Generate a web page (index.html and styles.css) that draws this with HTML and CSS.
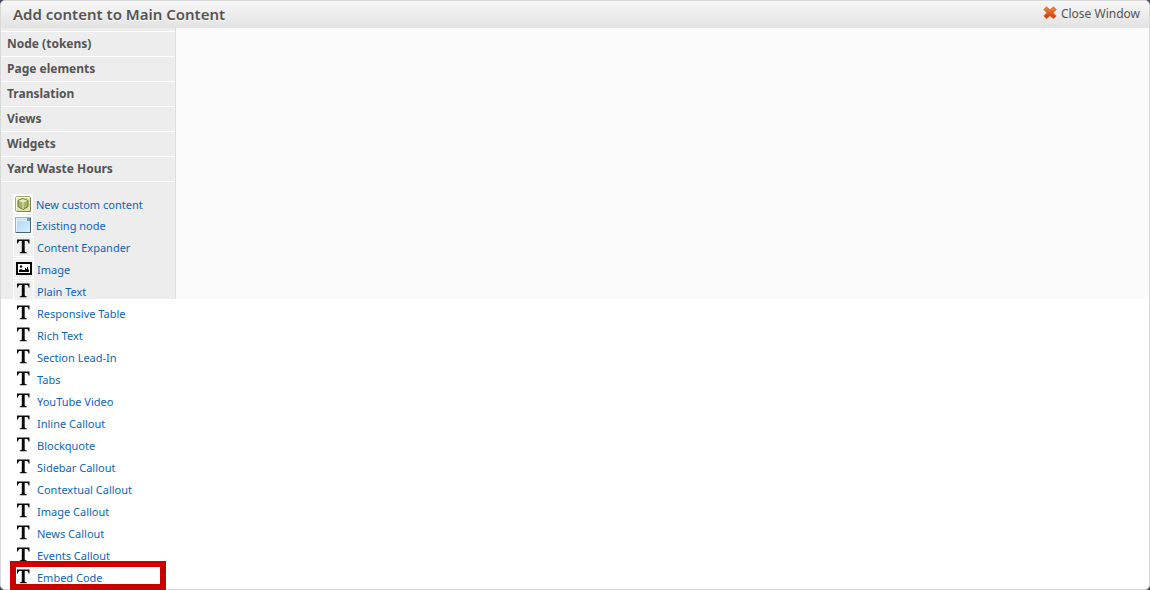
FILE: index.html
```html
<!DOCTYPE html>
<html lang="en">
<head>
<meta charset="utf-8">
<title>Add content to Main Content</title>
<link rel="stylesheet" href="styles.css">
</head>
<body>
<svg class="defs" aria-hidden="true">
  <defs>
    <linearGradient id="red" x1="0" y1="0" x2="0" y2="1"><stop offset="0" stop-color="#f08a3c"/><stop offset="1" stop-color="#c93408"/></linearGradient>
    <linearGradient id="blue" x1="0" y1="0" x2="1" y2="1"><stop offset="0" stop-color="#a3d4f6"/><stop offset="1" stop-color="#dcf1ff"/></linearGradient>
    <symbol id="type" viewBox="0 0 19 19">
      <path d="M3 2.500H15.500V6.500H14.500C14.200 4.500 13.500 4 12 4H10.700V14C10.700 15 11.200 15.200 12.700 15.300V16.300H5.800V15.300C7.300 15.200 7.800 15 7.800 14V4H6.500C5 4 4.300 4.500 4 6.500H3Z" fill="#080808"/>
    </symbol>
  </defs>
</svg>
<section class="modal">
  <header class="modal-header">
    <h1 class="modal-title">Add content to Main Content</h1>
    <button class="close" type="button">
      <svg class="close-icon" viewBox="0 0 14 14" aria-hidden="true"><path d="M3.500 .8 7 3.800 10.500 .8 13.200 3.500 10.200 6.700 13.200 10 10.500 12.700 7 9.700 3.500 12.700 .8 10 3.800 6.700 .8 3.500Z" fill="url(#red)" stroke="#d9622a" stroke-width=".7" stroke-linejoin="round"/></svg>
      Close Window
    </button>
  </header>
  <div class="modal-content">
    <nav class="sidebar">
      <a class="category" href="#">Node (tokens)</a>
      <a class="category" href="#">Page elements</a>
      <a class="category" href="#">Translation</a>
      <a class="category" href="#">Views</a>
      <a class="category" href="#">Widgets</a>
      <a class="category" href="#">Yard Waste Hours</a>
      <ul class="types">
        <li class="type type-small"><svg class="icon" viewBox="0 0 20 20" aria-hidden="true"><rect x="2.500" y="2.500" width="15" height="15" rx="1.500" fill="#dfe5a6" stroke="#a3aa72"/><path d="M3.500 16.500V3.500H16.500" fill="none" stroke="#fbfce8"/><path d="M17.500 4V17.500H4" fill="none" stroke="#7b8350"/><path d="M10 4.500 15 6.500V12.500L10 15.500 5 12.500V6.500Z" fill="#a9b26a" stroke="#6d763c"/><path d="M10 5 14.500 6.700 10 8.700 5.500 6.700Z" fill="#e6eab8"/><path d="M10 8.700V15" stroke="#e5e9ba" fill="none"/></svg><a class="link" href="#">New custom content</a></li>
        <li class="type type-small"><svg class="icon" viewBox="0 0 20 20" aria-hidden="true"><rect x="2.500" y="2.500" width="15" height="15" fill="url(#blue)" stroke="#8fb2cc"/><path d="M3.500 16.500V3.500H13.500M4 5.500H14" fill="none" stroke="#e2f4ff"/><path d="M14 3H17V6H14Z" fill="#6d9cbd"/><path d="M17.500 3V17.500H3" fill="none" stroke="#46647e"/></svg><a class="link" href="#">Existing node</a></li>
        <li class="type"><svg class="icon" aria-hidden="true"><use href="#type"/></svg><a class="link" href="#">Content Expander</a></li>
        <li class="type"><svg class="icon" viewBox="0 0 19 19" aria-hidden="true"><path d="M2 3H18V16H2Z" fill="#080808"/><path d="M4 5H16V14H4Z" fill="#fff"/><path d="M5 13V11L7 10 9 11 11 11V9H12V10H13V8H14V10L15 11V13Z" fill="#080808"/><circle cx="7" cy="7.500" r="1.200" fill="#080808"/></svg><a class="link" href="#">Image</a></li>
        <li class="type"><svg class="icon" aria-hidden="true"><use href="#type"/></svg><a class="link" href="#">Plain Text</a></li>
        <li class="type"><svg class="icon" aria-hidden="true"><use href="#type"/></svg><a class="link" href="#">Responsive Table</a></li>
        <li class="type"><svg class="icon" aria-hidden="true"><use href="#type"/></svg><a class="link" href="#">Rich Text</a></li>
        <li class="type"><svg class="icon" aria-hidden="true"><use href="#type"/></svg><a class="link" href="#">Section Lead-In</a></li>
        <li class="type"><svg class="icon" aria-hidden="true"><use href="#type"/></svg><a class="link" href="#">Tabs</a></li>
        <li class="type"><svg class="icon" aria-hidden="true"><use href="#type"/></svg><a class="link" href="#">YouTube Video</a></li>
        <li class="type"><svg class="icon" aria-hidden="true"><use href="#type"/></svg><a class="link" href="#">Inline Callout</a></li>
        <li class="type"><svg class="icon" aria-hidden="true"><use href="#type"/></svg><a class="link" href="#">Blockquote</a></li>
        <li class="type"><svg class="icon" aria-hidden="true"><use href="#type"/></svg><a class="link" href="#">Sidebar Callout</a></li>
        <li class="type"><svg class="icon" aria-hidden="true"><use href="#type"/></svg><a class="link" href="#">Contextual Callout</a></li>
        <li class="type"><svg class="icon" aria-hidden="true"><use href="#type"/></svg><a class="link" href="#">Image Callout</a></li>
        <li class="type"><svg class="icon" aria-hidden="true"><use href="#type"/></svg><a class="link" href="#">News Callout</a></li>
        <li class="type"><svg class="icon" aria-hidden="true"><use href="#type"/></svg><a class="link" href="#">Events Callout</a></li>
        <li class="type highlighted"><svg class="icon" aria-hidden="true"><use href="#type"/></svg><a class="link" href="#">Embed Code</a></li>
      </ul>
    </nav>
  </div>
</section>
</body>
</html>
```
FILE: styles.css
```css
*, *::after { box-sizing: border-box; }

body {
  margin: 0;
  background: #4a4f55;
  font-family: "Lucida Grande", "Noto Sans", "Open Sans", sans-serif;
  color: #545454;
}

.defs { position: absolute; width: 0; height: 0; }

.modal {
  height: 100vh;
  background: #fff;
  border: 1px solid #d8d8d8;
  border-radius: 5px;
}

.modal-header {
  display: flex;
  align-items: center;
  justify-content: space-between;
  height: 27px;
  padding: 0 9px 2px 12px;
  border-radius: 4px 4px 0 0;
  background: linear-gradient(#f7f7f7, #e2e2e2);
}

.modal-title {
  margin: 0;
  font-size: 15px;
  line-height: 20px;
  font-weight: 600;
  text-shadow: 0 1px 0 #fff;
}

.close {
  display: flex;
  align-items: center;
  gap: 4px;
  padding: 0;
  border: 0;
  background: none;
  color: #545454;
  font-family: inherit;
  font-size: 12px;
  line-height: 20px;
}

.close-icon { width: 14px; height: 14px; margin-bottom: 2px; }

.modal-content {
  display: flex;
  height: 271px;
  background: #fbfbfb;
}

.sidebar {
  width: 175px;
  padding-top: 3px;
  background: #ededed;
  border-right: 1px solid #ddd;
}

.category {
  display: block;
  height: 25px;
  padding-left: 6px;
  border-top: 1px solid #fff;
  color: #545454;
  font-size: 12px;
  line-height: 24px;
  font-weight: 700;
  text-decoration: none;
}

.types {
  margin: 0;
  padding: 12px 0 0 12px;
  border-top: 1px solid #fff;
  list-style: none;
}

.type {
  position: relative;
  display: flex;
  gap: 3px;
  height: 22px;
}

.type-small { height: 21px; }

.icon {
  flex: none;
  width: 21px;
  height: 21px;
  border: 1px solid #fff;
  background: #f0f0f0;
}

.type-small .icon { width: 20px; height: 20px; border: 0; background: #fff; }

.link {
  color: #0c66b4;
  font-size: 11px;
  line-height: 24px;
  text-decoration: none;
  white-space: nowrap;
}

.type-small .link { line-height: 22px; }

.type:nth-child(n+6) .icon { border-color: transparent; background: none; }

.highlighted::after {
  content: "";
  position: absolute;
  top: -5px;
  left: -3px;
  width: 156px;
  height: 29px;
  border: 6px solid #c90000;
}
```
